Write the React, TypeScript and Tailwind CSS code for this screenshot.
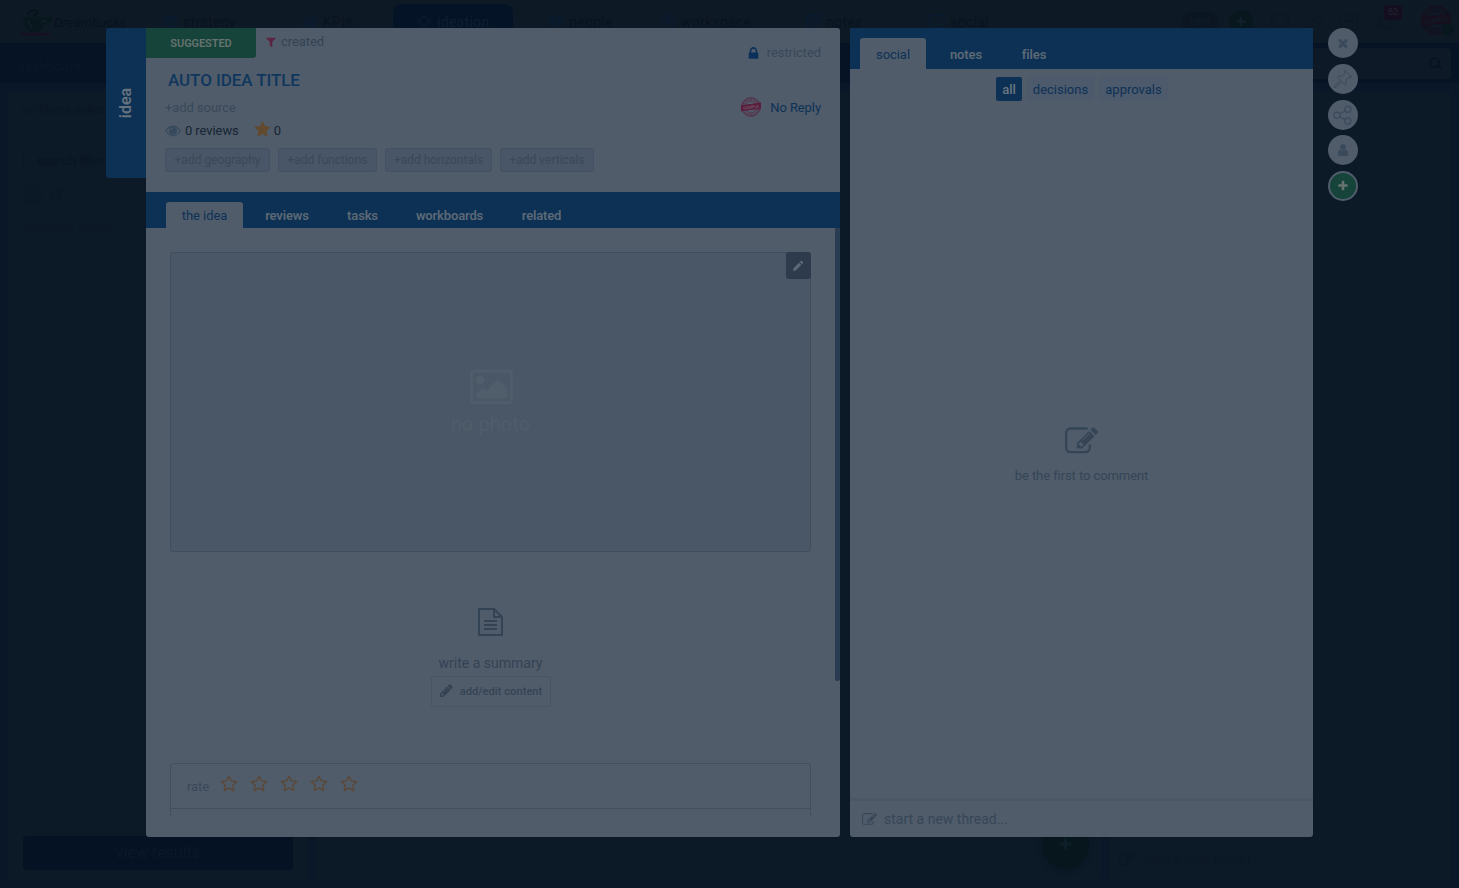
import React from "react";

const P = {
  pencilSquare:
    "M888 1184l116-116-152-152-116 116v56h96v96h56zm440-720q-16-16-33 1l-350 350q-17 17-1 33t33-1l350-350q17-17 1-33zm80 594v190q0 119-84.5 203.5t-203.5 84.5h-832q-119 0-203.5-84.5t-84.5-203.5v-832q0-119 84.5-203.5t203.5-84.5h832q63 0 117 25 15 7 18 23 3 17-9 29l-49 49q-14 14-32 8-23-6-45-6h-832q-66 0-113 47t-47 113v832q0 66 47 113t113 47h832q66 0 113-47t47-113v-126q0-13 9-22l64-64q15-15 35-7t20 29zm-96-738l288 288-672 672h-288v-288zm444 132l-92 92-288-288 92-92q28-28 68-28t68 28l152 152q28 28 28 68t-28 68z",
  pencil:
    "M491 1536l91-91-235-235-91 91v107h128v128h107zm523-928q0-22-22-22-10 0-17 7l-542 542q-7 7-7 17 0 22 22 22 10 0 17-7l542-542q7-7 7-17zm-54-192l416 416-832 832h-416v-416zm683 96q0 53-37 90l-166 166-416-416 166-165q36-38 90-38 53 0 91 38l235 234q37 39 37 91z",
  star: "M1728 647q0 22-26 48l-363 354 86 500q1 7 1 20 0 21-10.5 35.5t-30.5 14.5q-19 0-40-12l-449-236-449 236q-22 12-40 12-21 0-31.5-14.5t-10.5-35.5q0-6 2-20l86-500-364-354q-25-27-25-48 0-37 56-46l502-73 225-455q19-41 49-41t49 41l225 455 502 73q56 9 56 46z",
  starO:
    "M1201 1004l306-297-422-62-189-382-189 382-422 62 306 297-73 421 378-199 377 199zm527-357q0 22-26 48l-363 354 86 500q1 7 1 20 0 50-41 50-19 0-40-12l-449-236-449 236q-22 12-40 12-21 0-31.5-14.5t-10.5-35.5q0-6 2-20l86-500-364-354q-25-27-25-48 0-37 56-46l502-73 225-455q19-41 49-41t49 41l225 455 502 73q56 9 56 46z",
  filter:
    "M1595 295q17 41-14 70l-493 493v742q0 42-39 59-13 5-25 5-27 0-45-19l-256-256q-19-19-19-45v-486l-493-493q-31-29-14-70 17-39 59-39h1280q42 0 59 39z",
  close:
    "M1490 1322q0 40-28 68l-136 136q-28 28-68 28t-68-28l-294-294-294 294q-28 28-68 28t-68-28l-136-136q-28-28-28-68t28-68l294-294-294-294q-28-28-28-68t28-68l136-136q28-28 68-28t68 28l294 294 294-294q28-28 68-28t68 28l136 136q28 28 28 68t-28 68l-294 294 294 294q28 28 28 68z",
  plus: "M1600 736v192q0 40-28 68t-68 28h-416v416q0 40-28 68t-68 28h-192q-40 0-68-28t-28-68v-416h-416q-40 0-68-28t-28-68v-192q0-40 28-68t68-28h416v-416q0-40 28-68t68-28h192q40 0 68 28t28 68v416h416q40 0 68 28t28 68z",
  lock: "M640 768h512v-192q0-106-75-181t-181-75-181 75-75 181v192zm832 96v576q0 40-28 68t-68 28h-960q-40 0-68-28t-28-68v-576q0-40 28-68t68-28h32v-192q0-184 132-316t316-132 316 132 132 316v192h32q40 0 68 28t28 68z",
  user: "M1536 1399q0 109-62.5 187t-150.5 78h-854q-88 0-150.5-78t-62.5-187q0-85 8.5-160.5t31.5-152 58.5-131 94-89 134.5-34.5q131 128 313 128t313-128q76 0 134.5 34.5t94 89 58.5 131 31.5 152 8.5 160.5zm-256-887q0 159-112.5 271.5t-271.5 112.5-271.5-112.5-112.5-271.5 112.5-271.5 271.5-112.5 271.5 112.5 112.5 271.5z",
  picture:
    "M576 576q0 80-56 136t-136 56-136-56-56-136 56-136 136-56 136 56 56 136zm1024 384v448h-1408v-192l320-320 160 160 512-512zm96-704h-1600q-13 0-22.5 9.5t-9.5 22.5v1216q0 13 9.5 22.5t22.5 9.5h1600q13 0 22.5-9.5t9.5-22.5v-1216q0-13-9.5-22.5t-22.5-9.5zm160 32v1216q0 66-47 113t-113 47h-1600q-66 0-113-47t-47-113v-1216q0-66 47-113t113-47h1600q66 0 113 47t47 113z",
};

function Icon({ name, className }: { name: keyof typeof P; className: string }) {
  return (
    <svg viewBox={name === "picture" ? "-64 0 1920 1792" : "0 0 1792 1792"} className={"shrink-0 fill-current " + className}>
      <path d={P[name]} />
    </svg>
  );
}

function Stamp({ className, ink }: { className: string; ink: string }) {
  return (
    <svg viewBox="0 0 20 20" className={"shrink-0 " + className}>
      <circle cx="10" cy="10" r="9.3" fill="none" stroke="currentColor" strokeWidth=".8" />
      <circle cx="10" cy="10" r="7.7" fill="none" stroke="currentColor" strokeWidth="1.7" strokeDasharray="1 .8" opacity=".75" />
      <circle cx="10" cy="10" r="5.8" fill="none" stroke="currentColor" strokeWidth=".6" />
      <path d="M0 8.2L20 5.6V11.8L0 14.2Z" fill="currentColor" />
      <text x="10" y="11.600" fontSize="4.2" fontWeight="700" textAnchor="middle" className={ink} transform="rotate(-7 10 10)">SAMPLE</text>
    </svg>
  );
}

function Pin({ className }: { className: string }) {
  return (
    <svg viewBox="0 0 20 20" className={"shrink-0 " + className} fill="none" stroke="currentColor" strokeWidth="1" strokeLinejoin="round">
      <path d="M12 1.5L18.5 8L17 8.7L15.7 8.3L12.8 11.4L13 15L11.8 15.6L8.6 12.4L3.2 18.2Q2 19 1.3 18.4Q.8 17.7 1.8 16.6L7.4 11.3L4.6 8.4L5.3 7.2L8.8 7.3L11.8 4.3L11.3 2.8Z" />
    </svg>
  );
}

function Share() {
  return (
    <svg viewBox="0 0 20 20" className="size-5 text-[#3c4c5e]" fill="none" stroke="currentColor" strokeWidth="1.4">
      <circle cx="3.9" cy="10.300" r="3.1" />
      <circle cx="14.800" cy="4.4" r="3.1" />
      <circle cx="14.800" cy="16.100" r="3.1" />
      <path d="M6.700 8.900L12 6M6.700 11.700L12 14.500" />
    </svg>
  );
}

const navIcons: Record<string, React.ReactNode> = {
  strategy: (
    <>
      <circle cx="8" cy="9" r="6.5" /><circle cx="8" cy="9" r="3.5" /><path d="M8 9L14 3M12 2v3h3" />
    </>
  ),
  KPIs: <path d="M2 15V9h3v6M6.500 15V7h3v8M11 15V4h3v11M1 7L6 3L9 5L15 1" />,
  ideation: <path d="M6 14V11.500Q3.500 10 3.500 7A4.500 4.500 0 0 1 12.500 7Q12.500 10 10 11.500V14ZM8 0v1M1 3l1 1M15 3l-1 1M0 8h1.500M16 8h-1.500" />,
  people: (
    <>
      <circle cx="8" cy="7" r="3" /><circle cx="3" cy="4" r="2" /><circle cx="13" cy="4" r="2" /><path d="M3 16Q3 10 8 10T13 16M0 11Q0 7 4 7M16 11Q16 7 12 7" />
    </>
  ),
  workspace: (
    <>
      <circle cx="8" cy="9" r="6.500" /><path d="M6 1h4M10 6Q6 5 6 7.500T9 9T9 12L6 12M8 5v8" />
    </>
  ),
  notes: <path d="M2 1h13v14H2zM4 4h5M4 7h8M4 10h8M4 13h6M12 2v3" />,
  social: <path d="M1 1h14v12H9l-3 2v-2H1zM4 7h1.500M7.300 7h1.500M10.600 7h1.500" />,
};

function NavItem({ label, className }: { label: string; className: string }) {
  return (
    <div className={"flex h-full shrink-0 items-center gap-[5px] " + className}>
      <svg viewBox="0 0 16 16" className="size-4 shrink-0 text-[#0a1b2f]" fill="none" stroke="currentColor" strokeWidth="1.4">
        {navIcons[label]}
      </svg>
      <span className="translate-y-px text-[14px] tracking-[.3px]">{label}</span>
    </div>
  );
}

function Backdrop() {
  return (
    <div className="flex h-[888px] w-[1459px] flex-col bg-[#091728] text-[#07121e]">
      <header className="flex h-[43px] shrink-0 bg-[#0e1926]">
        <div className="flex w-[162px] items-center pl-[19px]">
          <svg viewBox="0 0 34 28" className="h-7 w-[34px] shrink-0">
            <path d="M4 9h24q5-1 5 2q0 5-8 6q-3 6-8 7h-4Q5 22 4 9" fill="#08171d" />
            <path d="M10 6Q8 4 12 3T16 1M14 8Q22 4 17 3" stroke="#07131a" strokeWidth="2.200" fill="none" />
            <path d="M9 13l4 7M23 13h5" stroke="#0d1e27" strokeWidth="1.800" fill="none" />
            <ellipse cx="16" cy="26" rx="16" ry="1.300" fill="#180f1f" />
          </svg>
          <span className="ml-[1px] translate-y-px text-[13px] italic tracking-[.2px]">Dreambucks</span>
        </div>
        <div className="flex h-[43px] w-[839px] text-[#08131f]">
          <NavItem label="strategy" className="w-[140px]" />
          <NavItem label="KPIs" className="w-[91px]" />
          <div className="mt-1 h-[39px] w-[120px] rounded-t-lg bg-[#051326] pl-[23px] pb-1 text-[#101e33]">
            <NavItem label="ideation" className="" />
          </div>
          <NavItem label="people" className="w-[112px] pl-[35px]" />
          <NavItem label="workspace" className="w-[178px] pl-[35px]" />
          <NavItem label="notes" className="w-[124px] pl-[2px]" />
          <NavItem label="social" className="pl-[2px]" />
        </div>
        <div className="flex items-center pl-[181px] text-[#0b1623]">
          <div className="flex h-5 w-[36px] items-center justify-center rounded-full bg-[#0b1622] text-[10px] text-[#0f1c29]">beta</div>
          <div className="ml-[11px] flex size-6 items-center justify-center rounded-full bg-[#08171e] text-[#10202a]"><Icon name="plus" className="size-3" /></div>
          <div className="ml-[18px] size-[18px] rounded-full border border-current" />
          <Pin className="ml-[18px] size-[18px]" />
          <div className="ml-[15px] flex h-4 w-[18px] items-center justify-center border border-current text-[9px]">•••</div>
          <svg viewBox="0 0 16 18" className="ml-[19px] h-[18px] w-4" fill="none" stroke="currentColor"><path d="M1 14Q3 12 3 7A5 5 0 0 1 13 7Q13 12 15 14ZM6 16h4" /></svg>
        </div>
      </header>
      <div className="flex h-10 shrink-0 items-center justify-between bg-[#061325] pl-[17px] pr-2">
        <span className="translate-y-1 text-[13px] tracking-[.3px] text-[#091829]">dashboard</span>
        <div className="flex h-[31px] w-[300px] items-center justify-end rounded bg-[#0d1926] pr-[9px]">
          <svg viewBox="0 0 14 14" className="size-[13px]" fill="none" stroke="currentColor" strokeWidth="1.500"><circle cx="6" cy="6" r="5" /><path d="M9.500 9.500L13 13" /></svg>
        </div>
      </div>
      <div className="flex grow gap-2 px-2 pb-[8px] pt-2">
        <div className="flex w-[300px] flex-col rounded bg-[#0c1927] text-[13px] text-[#0b1624]">
          <span className="ml-[13px] mt-[9px]">no filters selected</span>
          <div className="ml-[15px] mt-[29px] flex h-[25px] w-[270px] items-center border-l border-[#0b1725] pl-[13px] text-[#09141f]">search filters</div>
          <div className="ml-[15px] mt-[11px] flex items-center gap-[6px]"><div className="size-[19px] rounded bg-[#0b1826]" /><span>all</span></div>
          <span className="ml-[16px] mt-[13px] text-[#0c1825]">no filters found. .</span>
          <div className="mb-[10px] ml-[15px] mt-auto flex h-[34px] w-[270px] items-center justify-center rounded bg-[#051224] text-[16px] text-[#0a182a]">view results</div>
        </div>
        <div className="flex w-[785px] items-end justify-end rounded bg-[#0c1927] pr-[12px] pb-[12px]">
          <div className="flex size-[47px] items-center justify-center rounded-full bg-[#07161d] text-[#0c1e27] shadow-[0_3px_5px_#0a1622]"><Icon name="plus" className="size-[15px]" /></div>
        </div>
        <div className="flex grow flex-col justify-end rounded bg-[#0c1927]">
          <div className="flex h-10 items-center pl-[10px] text-[14px] text-[#0b1724]"><Icon name="pencilSquare" className="mr-2 size-4" /><span className="tracking-[-.3px]">start a new thread...</span></div>
        </div>
      </div>
      <div className="absolute left-[1384px] top-[5px] flex h-[15px] w-[18px] items-center justify-center rounded bg-[#140e1e] text-[9px] text-[#202435]">62</div>
      <Stamp className="absolute left-[1421px] top-[5px] size-[30px] text-[#170f1d]" ink="fill-[#101b27]" />
      <div className="absolute left-[1442px] top-[24px] size-3 rounded-full bg-[#07171d]" />
    </div>
  );
}

function Tag({ children, className }: { children: string; className: string }) {
  return <div className={"flex h-6 items-center justify-center rounded-[3px] border border-[#435162] bg-[#495667] text-[12px] text-[#3a4858] " + className}>{children}</div>;
}

function IdeaPanel() {
  return (
    <section className="flex h-[809px] w-[694px] flex-col overflow-hidden rounded-r-[3px] rounded-bl-[3px] bg-[#505c6a] tracking-[-.08px]">
      <div className="flex h-[164px] shrink-0 justify-between">
        <div className="flex flex-col">
          <div className="flex h-[30px]">
            <div className="flex w-[110px] items-center justify-center rounded-br-[3px] bg-[#16443a] pt-[2px] text-[11px] font-semibold text-[#66736f]">SUGGESTED</div>
            <div className="ml-[9px] flex h-[27px] items-center gap-1 text-[13px] text-[#344353]"><Icon name="filter" className="size-3 text-[#5b2440]" />created</div>
          </div>
          <h1 className="ml-[22px] mt-[12px] h-5 text-[17px] font-medium leading-5 text-[#0f365d]">AUTO IDEA TITLE</h1>
          <div className="ml-[19px] mt-[10px] h-4 text-[13px] leading-4 text-[#394858]">+add source</div>
          <div className="ml-[19px] mt-[7px] flex h-4 items-center text-[13px] leading-4 text-[#172433]">
            <svg viewBox="0 0 16 12" className="h-3 w-4 text-[#374a5d]" fill="none" stroke="currentColor">
              <path d="M.7 6Q8-3.600 15.300 6Q8 15.600 .7 6Z" strokeWidth="1.200" /><circle cx="8" cy="5.700" r="4" fill="currentColor" stroke="none" /><path d="M5.800 5Q6 3.300 7.800 3" stroke="#505c6a" strokeWidth=".9" />
            </svg>
            <span className="ml-1">0 reviews</span>
            <Icon name="star" className="ml-[15px] size-[17px] -translate-y-[2px] text-[#624a31]" />
            <span className="ml-[3px]">0</span>
          </div>
          <div className="ml-[19px] mt-[9px] flex gap-2 tracking-normal">
            <Tag className="w-[105px]">+add geography</Tag>
            <Tag className="w-[99px]">+add functions</Tag>
            <Tag className="w-[107px]">+add horizontals</Tag>
            <Tag className="w-[94px]">+add verticals</Tag>
          </div>
        </div>
        <div className="flex flex-col items-end pr-[19px] text-[13px] leading-4">
          <div className="mt-[17px] flex items-center gap-[6px] text-[#394858]"><Icon name="lock" className="size-[15px] text-[#0b315a]" />restricted</div>
          <div className="mt-[36px] flex items-center gap-[9px] text-[#0e3156]"><Stamp className="size-5 text-[#5a1d3b]" ink="fill-[#6b5568]" /><span className="translate-y-px">No Reply</span></div>
        </div>
      </div>
      <nav className="flex h-9 shrink-0 items-end gap-[6px] bg-[#0d3154] pl-5 text-[13px] font-semibold tracking-[-.15px] text-[#5c6976]">
        <Tab active className="h-[26px] w-[77px]">the idea</Tab>
        <Tab className="h-[26px] w-[76px]">reviews</Tab>
        <Tab className="h-[26px] w-[63px]">tasks</Tab>
        <Tab className="h-[26px] w-[99px]">workboards</Tab>
        <Tab className="h-[26px] w-[73px]">related</Tab>
      </nav>
      <div className="flex h-[588px] shrink-0 overflow-hidden">
        <div className="flex w-[689px] flex-col px-6 pt-6">
          <div className="relative flex h-[300px] w-[641px] shrink-0 flex-col items-center rounded-[3px] border border-[#3f4d5d] bg-[#4a5767] pt-[114px] text-[#505d6a]">
            <Icon name="picture" className="ml-px h-10 w-[43px]" />
            <span className="mt-[3px] text-[20px] leading-7 tracking-[.1px]">no photo</span>
            <button className="absolute -right-px -top-px flex h-[27px] w-[25px] items-center justify-center rounded-[3px] bg-[#2d3b4c] pr-px text-[#5b6876]"><svg viewBox="0 0 12 12" className="size-3 fill-current"><path d="M1 11L1.500 8.200L7 2.700L9.300 5L3.800 10.500ZM7.700 2L8.700 1Q9.300 .5 10 1L11 2Q11.500 2.700 11 3.300L10 4.300Z" /></svg></button>
          </div>
          <div className="mt-14 flex flex-col items-center tracking-normal text-[#344354]">
            <svg viewBox="0 0 25 28" className="h-7 w-[25px]" fill="none" stroke="currentColor" strokeWidth="2">
              <path d="M1 1H16L24 9V27H1ZM16 1V9H24M6 13H19M6 17H19M6 21H19" />
            </svg>
            <span className="mt-[18px] text-[14px] leading-[18px]">write a summary</span>
            <button className="mt-[4px] flex h-[31px] w-[120px] items-center justify-center gap-[6px] rounded-[2px] border border-[#485564] text-[11px] font-medium"><Icon name="pencil" className="size-[15px] -translate-y-px" /><span className="translate-y-px tracking-[.08px]">add/edit content</span></button>
          </div>
          <div className="mt-[56px] h-[60px] w-[641px] shrink-0 rounded-t-[3px] border border-[#434f5e]">
            <div className="flex h-[45px] items-center border-b border-[#434f5e] pl-[16px] text-[13px] text-[#3a4859]">
              <span className="translate-y-px">rate</span>
              <div className="ml-[11px] flex gap-[12px] pb-1 text-[#5c4735]">
                {[0, 1, 2, 3, 4].map((n) => <Icon key={n} name="starO" className="size-[18px]" />)}
              </div>
            </div>
          </div>
        </div>
        <div className="h-[453px] w-[5px] rounded-b-[2px] bg-[#2a3c52]" />
      </div>
    </section>
  );
}

function Tab({ children, className, active }: { children: string; className: string; active?: boolean }) {
  return <div className={"flex shrink-0 items-center justify-center pt-[2px] " + (active ? "rounded-t-[3px] bg-[#505c6a] font-normal tracking-[-.05px] text-[#0e3156] " : "") + className}>{children}</div>;
}

function SocialPanel() {
  return (
    <section className="ml-[10px] flex h-[809px] w-[463px] flex-col overflow-hidden rounded-[3px] bg-[#505c6a] text-[13px]">
      <nav className="flex h-[41px] shrink-0 items-end gap-2 bg-[#0d3154] pl-[10px] font-semibold tracking-[-.12px] text-[#5c6976]">
        <Tab active className="h-[31px] w-[66px]">social</Tab>
        <Tab className="h-[31px] w-[64px]">notes</Tab>
        <Tab className="h-[31px] w-[56px]">files</Tab>
      </nav>
      <div className="ml-[146px] mt-2 flex h-6 gap-[5px] text-[#0e3156]">
        <div className="flex w-[26px] items-center justify-center rounded-[2px] bg-[#0d3154] pt-[2px] font-medium text-[#6c7783]">all</div>
        <div className="flex w-[67px] items-center justify-center rounded-[2px] bg-[#4c5a6b] pt-[2px]">decisions</div>
        <div className="flex w-[69px] items-center justify-center rounded-[2px] bg-[#4c5a6b] pt-[2px]">approvals</div>
      </div>
      <div className="flex grow flex-col items-center pt-[324px] text-[#354556]">
        <Icon name="pencilSquare" className="size-[33px]" />
        <span className="mt-[10px] leading-4 tracking-[-.08px]">be the first to comment</span>
      </div>
      <div className="flex h-[39px] shrink-0 items-center border-t-[3px] border-[#4a5766] pl-3 text-[14px] text-[#374657]">
        <Icon name="pencilSquare" className="mr-[7px] size-[15px]" />start a new thread...
      </div>
    </section>
  );
}

function Round({ children }: { children: React.ReactNode }) {
  return <button className="flex size-[30px] items-center justify-center rounded-full bg-[#505c6a] text-[#3b4a5b]">{children}</button>;
}

export default function App() {
  return (
    <main className="relative h-[888px] w-[1459px] overflow-hidden font-[Roboto,sans-serif]">
      <Backdrop />
      <div className="absolute inset-0 flex items-start pl-[106px] pt-7">
        <div className="flex h-[150px] w-10 items-center justify-center rounded-l-[3px] bg-[#0d3154] text-[16px] font-semibold text-[#66727e]">
          <span className="-rotate-90">idea</span>
        </div>
        <IdeaPanel />
        <SocialPanel />
        <div className="ml-[15px] flex flex-col gap-[5.750px]">
          <Round><Icon name="close" className="size-[14px]" /></Round>
          <Round><Pin className="size-5" /></Round>
          <Round><Share /></Round>
          <Round><Icon name="user" className="size-[14px]" /></Round>
          <button className="flex size-[30px] items-center justify-center rounded-full border-2 border-[#505c6a] bg-[#16443a] text-[#66736f]"><Icon name="plus" className="size-3" /></button>
        </div>
      </div>
    </main>
  );
}
